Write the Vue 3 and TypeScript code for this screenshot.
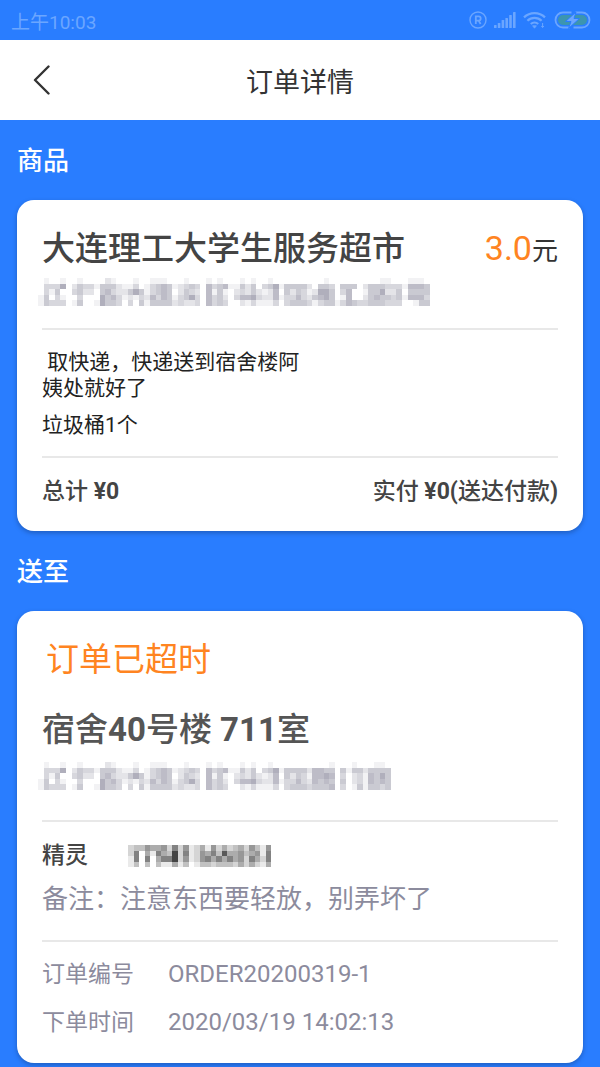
<script setup lang="ts">
interface Tile { x: number; y: number; level: number }
interface Mosaic { cols: number; rows: number; tiles: Tile[] }
interface Detail { label: string; value: string }

// Each digit is the darkness of one tile, from 0 (clear) to 9 (darkest).
function mosaic(lines: string[]): Mosaic {
  const rows = lines.map((line) => line.replace(/ /g, ''))
  const tiles = rows.flatMap((row, y) =>
    [...row].map((digit, x) => ({ x, y, level: Number(digit) })).filter((tile) => tile.level > 0),
  )
  return { cols: Math.max(...rows.map((row) => row.length)), rows: rows.length, tiles }
}

const shopAddress = mosaic([
  '01001 00100 00210 00100 11100 01000 10100 01010 01000 00000 01000 00000 01100 01110',
  '03336 02433 14442 11301 34541 23430 53451 14240 34614 44420 44304 44024 44333 15554',
  '03140 03422 04532 24641 34540 24320 51410 23242 12504 24312 66403 50014 46224 04444',
  '14031 00300 06453 12132 53541 34630 53420 35563 22513 35324 56401 50024 54434 15553',
  '14333 01400 16443 03041 44442 32230 53430 02131 11303 44431 34413 54334 44333 00144',
])

const homeAddress = mosaic([
  '01001 00100 00210 00100 11100 01000 10100 01010 01000 00000 00100 01000 110',
  '03336 02433 14442 11301 34541 23430 53451 14240 34614 44425 54404 14424 444',
  '03140 03422 04532 24641 34540 24320 51410 23242 12504 24315 56503 02315 464',
  '14031 00300 06453 12132 53541 34630 53420 35563 22513 35325 45404 02315 454',
  '14333 01400 16443 03041 44442 32230 53430 02131 11303 44434 44503 01414 434',
])

const phone = mosaic([
  '23354 45262 51241 52423 42531 5',
  '26041 64392 61254 63844 53451 6',
  '16060 46692 51256 46464 52642 6',
  '13030 31141 30133 23332 42421 4',
])

const signalBars = [3, 5, 8, 10, 13, 16]

const details: Detail[] = [
  { label: '订单编号', value: 'ORDER20200319-1' },
  { label: '下单时间', value: '2020/03/19 14:02:13' },
]
</script>

<template>
  <div class="page">
    <div class="status">
      <span class="clock">上午10:03</span>
      <div class="indicators">
        <svg width="18" height="18" viewBox="0 0 18 18" fill="none" stroke="currentColor" aria-hidden="true">
          <circle cx="9" cy="9" r="8" stroke-width="1.4" />
          <path d="M6.8 13V5.4h2.8a2 2 0 0 1 0 4.2H6.8M9.6 9.6l2 3.4" stroke-width="1.8" />
        </svg>
        <svg width="22" height="16" viewBox="0 0 22 16" fill="currentColor" aria-hidden="true">
          <rect v-for="(h, i) in signalBars" :key="i" :x="i * 3.8" :y="16 - h" width="2.6" :height="h" rx="0.6" />
        </svg>
        <svg width="24" height="18" viewBox="0 0 24 18" fill="none" stroke="currentColor" stroke-width="2.2" aria-hidden="true">
          <path d="M1 6.4a15 15 0 0 1 21 0M4.4 9.8a10.2 10.2 0 0 1 14.2 0M7.8 13a5.4 5.4 0 0 1 7.4 0" />
          <path d="M9.6 14.8h3.8l-1.9 2.4z" fill="currentColor" stroke-width="0.8" />
          <path d="M19.6 12v4.4M18.4 15l1.2 1.5 1.2-1.5" stroke-width="1" />
        </svg>
        <svg width="37" height="18" viewBox="0 0 37 18" fill="none" aria-hidden="true">
          <rect x="4" y="4" width="29" height="10" rx="5" fill="#3c95b0" />
          <path d="M17.5 1.5H9a7.5 7.5 0 0 0 0 15h6.5M21.5 1.5H28a7.5 7.5 0 0 1 0 15h-8.5" stroke="currentColor" stroke-width="1.8" />
          <path d="M22 1 11.5 10.5h5.500l-2.500 7 11-10h-5.500z" fill="currentColor" stroke="#297dff" stroke-width="1" />
        </svg>
      </div>
    </div>

    <header class="header">
      <button class="back" type="button" aria-label="返回">
        <svg width="18" height="30" viewBox="0 0 18 30" fill="none" stroke="#333" stroke-width="2.4" stroke-linecap="round" stroke-linejoin="round" aria-hidden="true">
          <path d="M15.5 1.5 2 15l13.5 13.5" />
        </svg>
      </button>
      <h1 class="title">订单详情</h1>
    </header>

    <main class="content">
      <h2 class="section">商品</h2>
      <section class="card">
        <div class="row">
          <h3 class="name">大连理工大学生服务超市</h3>
          <p class="price">3.0<span class="unit">元</span></p>
        </div>
        <svg class="mask shop-mask" :viewBox="`0 0 ${shopAddress.cols} ${shopAddress.rows}`" role="img" aria-label="地址已隐藏">
          <rect v-for="t in shopAddress.tiles" :key="`${t.x}-${t.y}`" :x="t.x" :y="t.y" width="1" height="1" :opacity="t.level / 9" />
        </svg>
        <hr class="rule" />
        <div class="goods">
          <p class="goods-name">{{ ' ' }}取快递，快递送到宿舍楼阿姨处就好了</p>
          <p>垃圾桶1个</p>
        </div>
        <hr class="rule" />
        <div class="row totals">
          <span>总计 <b>¥0</b></span>
          <span>实付 <b>¥0(</b>送达付款<b>)</b></span>
        </div>
      </section>

      <h2 class="section">送至</h2>
      <section class="card">
        <p class="overdue">订单已超时</p>
        <h3 class="name room">宿舍<b>40</b>号楼 <b>711</b>室</h3>
        <svg class="mask home-mask" :viewBox="`0 0 ${homeAddress.cols} ${homeAddress.rows}`" role="img" aria-label="地址已隐藏">
          <rect v-for="t in homeAddress.tiles" :key="`${t.x}-${t.y}`" :x="t.x" :y="t.y" width="1" height="1" :opacity="t.level / 9" />
        </svg>
        <hr class="rule" />
        <div class="contact">
          <span>精灵</span>
          <svg class="phone" :viewBox="`0 0 ${phone.cols} ${phone.rows}`" role="img" aria-label="电话已隐藏">
            <rect v-for="t in phone.tiles" :key="`${t.x}-${t.y}`" :x="t.x" :y="t.y" width="1" height="1" :opacity="t.level / 9" />
          </svg>
        </div>
        <p class="note">备注：注意东西要轻放，别弄坏了</p>
        <hr class="rule" />
        <dl class="details">
          <div v-for="d in details" :key="d.label" class="detail">
            <dt>{{ d.label }}</dt>
            <dd>{{ d.value }}</dd>
          </div>
        </dl>
      </section>
    </main>
  </div>
</template>

<style>
body {
  margin: 0;
  background: #297dff;
}
</style>

<style scoped>
.page {
  min-height: 100vh;
  box-sizing: border-box;
  padding-bottom: 4px;
  background: #297dff;
  color: #222;
  font-family: Roboto, "Noto Sans CJK SC", sans-serif;
}
h1, h2, h3, p, dl, dd {
  margin: 0;
}
b {
  font-weight: 700;
}
.status {
  display: flex;
  align-items: center;
  justify-content: space-between;
  height: 40px;
  padding: 0 9px 0 11px;
  color: #6ba6ff;
}
.clock {
  font-size: 19px;
}
.indicators {
  display: flex;
  align-items: center;
  gap: 7px;
}
.header {
  display: grid;
  grid-template-columns: 80px 1fr 80px;
  align-items: center;
  height: 80px;
  background: #fff;
}
.back {
  display: flex;
  align-items: center;
  height: 80px;
  padding: 0 0 0 33px;
  border: 0;
  background: none;
}
.title {
  color: #333;
  font-size: 27px;
  font-weight: 400;
  text-align: center;
}
.content {
  padding: 0 17px;
}
.section {
  color: #fff;
  font-size: 26px;
  font-weight: 500;
  line-height: 78px;
  padding-top: 2px;
}
.card {
  padding: 25px 25px 24px;
  border-radius: 17px;
  background: #fff;
  box-shadow: 0 2px 5px rgba(0, 0, 0, 0.25);
}
.row {
  display: flex;
  align-items: baseline;
  justify-content: space-between;
}
.name {
  color: #444;
  font-size: 33px;
  font-weight: 500;
  line-height: 48px;
}
.price {
  color: #ff8421;
  font-size: 34px;
  line-height: 36px;
}
.unit {
  color: #333;
  font-size: 26px;
}
.mask {
  display: block;
  height: 28px;
  margin-left: -4px;
  fill: #88879a;
  shape-rendering: crispEdges;
}
.shop-mask {
  margin-top: 5px;
  margin-bottom: 22px;
}
.home-mask {
  margin-top: 8px;
  margin-bottom: 30px;
}
.rule {
  height: 2px;
  margin: 0;
  border: 0;
  background: #e8e8e8;
}
.goods {
  display: grid;
  gap: 11px;
  padding: 19px 0 18px;
  font-size: 21px;
  line-height: 26px;
}
.goods-name {
  max-width: 264px;
  white-space: pre-wrap;
}
.totals {
  padding-top: 18px;
  margin-bottom: -1px;
  color: #444;
  font-size: 23px;
  font-weight: 500;
  line-height: 32px;
}
.overdue {
  padding-left: 4px;
  color: #ff8421;
  font-size: 33px;
  line-height: 48px;
}
.room {
  margin-top: 22px;
  color: #555;
}
.contact {
  display: flex;
  align-items: center;
  gap: 40px;
  padding-top: 18px;
  color: #444;
  font-size: 23px;
  font-weight: 500;
  line-height: 32px;
}
.phone {
  height: 22px;
  fill: #444;
  shape-rendering: crispEdges;
}
.note {
  margin: 9px 0 23px;
  color: #8c8b9d;
  font-size: 26px;
  line-height: 36px;
}
.details {
  display: grid;
  gap: 16px;
  padding-top: 17px;
  color: #8c8b9d;
  font-size: 23px;
  line-height: 32px;
}
.detail {
  display: flex;
  align-items: baseline;
  gap: 34px;
}
.detail dd {
  font-size: 24px;
  line-height: 24px;
}
</style>
